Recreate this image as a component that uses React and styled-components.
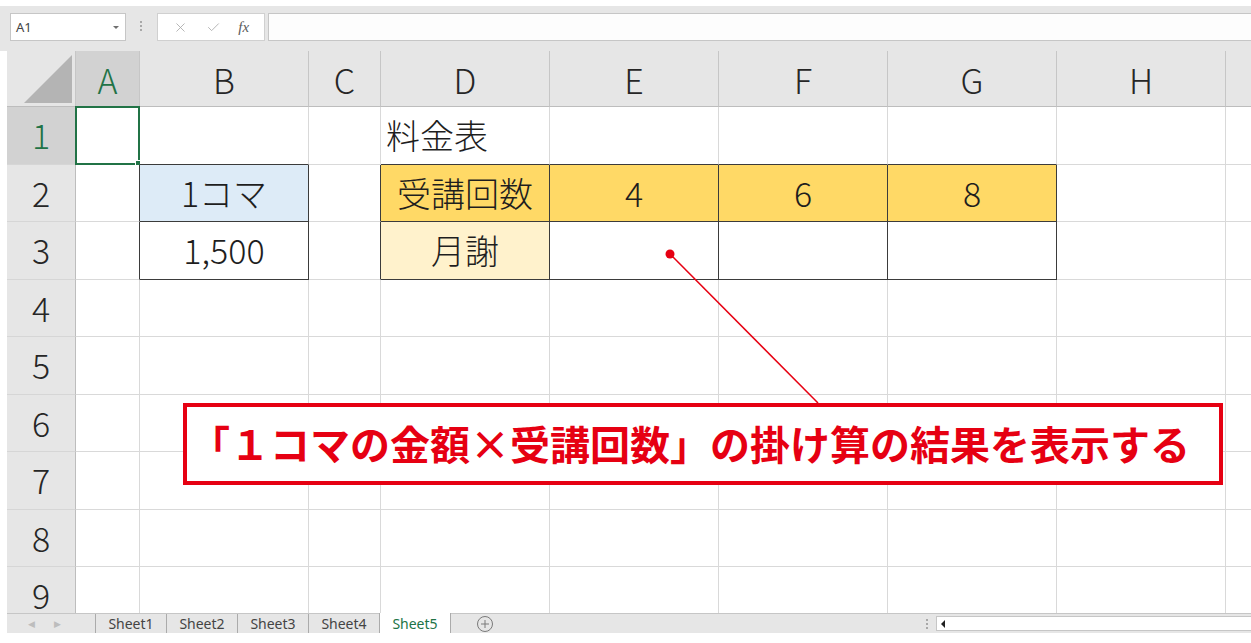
import React from "react"
import styled, {createGlobalStyle} from "styled-components"
import {X, Check} from "lucide-react"

const GlobalStyle = createGlobalStyle`
    html, body {
        margin: 0;
        padding: 0;
        background: #ffffff;
    }
    body {
        font-family: "Noto Sans CJK JP", "Noto Sans", sans-serif;
    }
`

const COLUMNS = [
    {name: "A", width: 64},
    {name: "B", width: 169},
    {name: "C", width: 72},
    {name: "D", width: 169},
    {name: "E", width: 169},
    {name: "F", width: 169},
    {name: "G", width: 169},
    {name: "H", width: 169},
    {name: "", width: 60},
]

const ROWS = [1, 2, 3, 4, 5, 6, 7, 8, 9]

const CELLS = {
    "1D": {text: "料金表", align: "left"},
    "2B": {text: "1コマ", fill: "#ddebf7"},
    "3B": {text: "1,500"},
    "2D": {text: "受講回数", fill: "#ffd966"},
    "2E": {text: "4", fill: "#ffd966"},
    "2F": {text: "6", fill: "#ffd966"},
    "2G": {text: "8", fill: "#ffd966"},
    "3D": {text: "月謝", fill: "#fff2cc"},
}

const BOXED = ["2B", "3B", "2D", "2E", "2F", "2G", "3D", "3E", "3F", "3G"]

const isBoxed = (row, colIndex) => {
    const col = COLUMNS[colIndex]
    return col ? BOXED.includes(`${row}${col.name}`) : false
}

const Page = styled.div`
    position: relative;
    width: 1251px;
    height: 643px;
    overflow: hidden;
    background: #ffffff;
    padding-top: 6px;
    box-sizing: border-box;
`

const Toolbar = styled.div`
    display: flex;
    align-items: flex-start;
    height: 45px;
    padding: 7px 0 0 10px;
    box-sizing: border-box;
    background: #e6e6e6;
`

const NameBox = styled.div`
    display: flex;
    align-items: center;
    justify-content: space-between;
    width: 116px;
    height: 28px;
    box-sizing: border-box;
    padding: 0 6px 0 5px;
    background: #ffffff;
    border: 1px solid #c6c6c6;
    font-family: "Noto Sans", sans-serif;
    font-size: 13px;
    color: #444444;
`

const Caret = styled.span`
    width: 0;
    height: 0;
    border-left: 3px solid transparent;
    border-right: 3px solid transparent;
    border-top: 3px solid #6f6f6f;
`

const Grip = styled.div`
    display: flex;
    flex-direction: column;
    gap: 2px;
    margin: 8px 15px 0 14px;

    span {
        width: 2px;
        height: 2px;
        background: #a8a8a8;
    }
`

const FxBox = styled.div`
    display: flex;
    align-items: center;
    justify-content: space-around;
    width: 108px;
    height: 28px;
    box-sizing: border-box;
    padding: 0 6px;
    background: #ffffff;
    border: 1px solid #d0d0d0;
    color: #a6a6a6;
`

const FxLabel = styled.span`
    font-family: "Liberation Serif", serif;
    font-style: italic;
    font-size: 15px;
    color: #5a5a5a;
`

const FormulaInput = styled.div`
    flex: 1;
    height: 28px;
    margin-left: 3px;
    box-sizing: border-box;
    background: #fdfdfd;
    border: 1px solid #c6c6c6;
    border-right: none;
`

const SheetArea = styled.div`
    padding-left: 7px;
    height: 562px;
    overflow: hidden;
`

const Grid = styled.div`
    display: grid;
    grid-template-columns: 69px ${COLUMNS.map(c => `${c.width}px`).join(" ")};
    grid-template-rows: 56px repeat(9, 57.5px);
`

const Corner = styled.div`
    position: relative;
    background: #e6e6e6;
    border-right: 1px solid #c6c6c6;
    border-bottom: 1px solid #bdbdbd;
    box-sizing: border-box;

    &::after {
        content: "";
        position: absolute;
        right: 3px;
        bottom: 3px;
        width: 48px;
        height: 48px;
        background: #b4b4b4;
        clip-path: polygon(100% 0, 100% 100%, 0 100%);
    }
`

const ColHeader = styled.div`
    display: flex;
    align-items: center;
    justify-content: center;
    box-sizing: border-box;
    background: ${({$active}) => ($active ? "#d2d2d2" : "#e6e6e6")};
    color: ${({$active}) => ($active ? "#217346" : "#262626")};
    border-right: 1px solid #c6c6c6;
    border-bottom: 1px solid #bdbdbd;
    font-size: 34px;
    font-weight: 300;
    line-height: 1;
    padding-top: 2px;
`

const RowHeader = styled.div`
    display: flex;
    align-items: center;
    justify-content: center;
    box-sizing: border-box;
    background: ${({$active}) => ($active ? "#d2d2d2" : "#e6e6e6")};
    color: ${({$active}) => ($active ? "#217346" : "#262626")};
    border-right: 1px solid #bdbdbd;
    border-bottom: 1px solid #d6d6d6;
    font-size: 34px;
    font-weight: 300;
    line-height: 1;
`

const Cell = styled.div`
    position: relative;
    display: flex;
    align-items: center;
    justify-content: ${({$align}) => ($align === "left" ? "flex-start" : "center")};
    padding-left: ${({$align}) => ($align === "left" ? "5px" : "0")};
    box-sizing: border-box;
    background: ${({$fill}) => $fill || "#ffffff"};
    border-right: 1px solid ${({$darkRight}) => ($darkRight ? "#3b3b3b" : "#d9d9d9")};
    border-bottom: 1px solid ${({$darkBottom}) => ($darkBottom ? "#3b3b3b" : "#d9d9d9")};
    font-size: 34px;
    font-weight: 300;
    line-height: 1;
    color: #1e1e1e;
    white-space: nowrap;
`

const Selection = styled.span`
    position: absolute;
    top: -1px;
    left: -1px;
    right: -1px;
    bottom: -1px;
    border: 2px solid #217346;
    pointer-events: none;

    &::after {
        content: "";
        position: absolute;
        right: -4px;
        bottom: -4px;
        width: 5px;
        height: 5px;
        background: #217346;
        border: 1px solid #ffffff;
    }
`

const TabBar = styled.div`
    display: flex;
    align-items: stretch;
    height: 20px;
    margin-left: 7px;
    background: #e6e6e6;
    border-top: 1px solid #c6c6c6;
    box-sizing: border-box;
    font-family: "Noto Sans", sans-serif;
    font-size: 14px;
`

const TabNav = styled.div`
    display: flex;
    align-items: center;
    gap: 19px;
    width: 88px;
    padding-left: 21px;
    box-sizing: border-box;
    color: #bdbdbd;
    font-size: 9px;
`

const Tab = styled.div`
    display: flex;
    align-items: center;
    justify-content: center;
    width: 70px;
    margin-top: ${({$active}) => ($active ? "-1px" : "0")};
    border-left: 1px solid #ababab;
    background: ${({$active}) => ($active ? "#ffffff" : "transparent")};
    color: ${({$active}) => ($active ? "#217346" : "#444444")};
    box-shadow: ${({$active}) => ($active ? "1px 0 0 #ababab" : "none")};
`

const AddSheet = styled.div`
    display: flex;
    align-items: center;
    margin-left: 26px;
    width: 445px;
    color: #7a7a7a;
`

const ScrollGrip = styled(Grip)`
    margin: 5px 8px 0 5px;
`

const ScrollBar = styled.div`
    display: flex;
    align-items: center;
    flex: 1;
    margin-top: 2px;
    height: 15px;
    background: #ffffff;
    border: 1px solid #c6c6c6;
    border-right: none;
    box-sizing: border-box;
`

const ScrollArrow = styled.span`
    width: 0;
    height: 0;
    margin-left: 4px;
    border-top: 4px solid transparent;
    border-bottom: 4px solid transparent;
    border-right: 4px solid #202020;
`

const Callout = styled.div`
    position: absolute;
    left: 183px;
    top: 403px;
    width: 1040px;
    height: 82px;
    box-sizing: border-box;
    display: flex;
    align-items: center;
    padding: 0 0 2px 3px;
    background: #ffffff;
    border: 4px solid #e60012;
    color: #e60012;
    font-family: "Noto Sans CJK JP", sans-serif;
    font-weight: 700;
    font-size: 40px;
    line-height: 1;
    white-space: nowrap;
`

const Pointer = styled.svg`
    position: absolute;
    left: 0;
    top: 0;
    pointer-events: none;
`

const SHEETS = ["Sheet1", "Sheet2", "Sheet3", "Sheet4", "Sheet5"]

const App = () => {
    return (
        <Page>
            <GlobalStyle />

            <Toolbar>
                <NameBox>
                    A1
                    <Caret />
                </NameBox>
                <Grip>
                    <span />
                    <span />
                    <span />
                </Grip>
                <FxBox>
                    <X size={15} strokeWidth={1.3} />
                    <Check size={15} strokeWidth={1.3} />
                    <FxLabel>fx</FxLabel>
                </FxBox>
                <FormulaInput />
            </Toolbar>

            <SheetArea>
                <Grid>
                    <Corner />
                    {COLUMNS.map(col => (
                        <ColHeader key={col.name || "end"} $active={col.name === "A"}>
                            {col.name}
                        </ColHeader>
                    ))}

                    {ROWS.map(row => (
                        <React.Fragment key={row}>
                            <RowHeader $active={row === 1}>{row}</RowHeader>
                            {COLUMNS.map((col, i) => {
                                const cell = CELLS[`${row}${col.name}`] || {}
                                const darkRight = isBoxed(row, i) || isBoxed(row, i + 1)
                                const darkBottom = isBoxed(row, i) || isBoxed(row + 1, i)
                                return (
                                    <Cell
                                        key={`${row}-${i}`}
                                        $fill={cell.fill}
                                        $align={cell.align}
                                        $darkRight={darkRight}
                                        $darkBottom={darkBottom}
                                    >
                                        {cell.text}
                                        {row === 1 && col.name === "A" && <Selection />}
                                    </Cell>
                                )
                            })}
                        </React.Fragment>
                    ))}
                </Grid>
            </SheetArea>

            <TabBar>
                <TabNav>
                    <span>◀</span>
                    <span>▶</span>
                </TabNav>
                {SHEETS.map(name => (
                    <Tab key={name} $active={name === "Sheet5"}>
                        {name}
                    </Tab>
                ))}
                <AddSheet>
                    <svg width="18" height="18" viewBox="0 0 18 18">
                        <circle cx="9" cy="9" r="7.5" fill="none" stroke="#7a7a7a" strokeWidth="1" />
                        <path d="M9 5v8M5 9h8" stroke="#7a7a7a" strokeWidth="1" />
                    </svg>
                </AddSheet>
                <ScrollGrip>
                    <span />
                    <span />
                    <span />
                </ScrollGrip>
                <ScrollBar>
                    <ScrollArrow />
                </ScrollBar>
            </TabBar>

            <Pointer width="1251" height="643" viewBox="0 0 1251 643">
                <line x1="670" y1="254" x2="818" y2="403" stroke="#e60012" strokeWidth="1.5" />
                <circle cx="670" cy="254" r="4.5" fill="#e60012" />
            </Pointer>

            <Callout>「１コマの金額×受講回数」の掛け算の結果を表示する</Callout>
        </Page>
    )
}

export default App
